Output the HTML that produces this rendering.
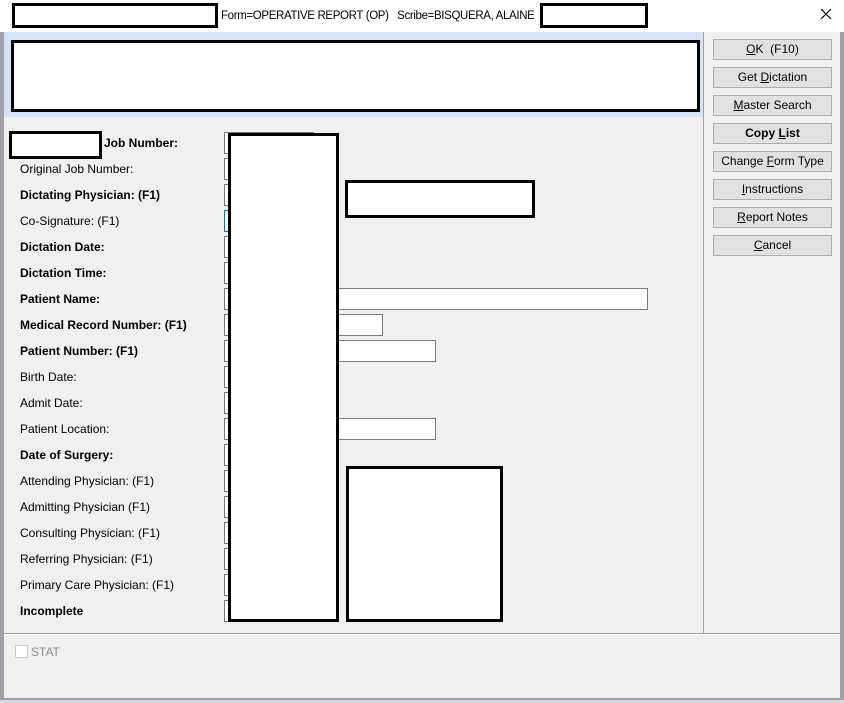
<!DOCTYPE html>
<html><head><style>
body{margin:0;width:844px;height:703px;background:#f0f0f0;font-family:"Liberation Sans",sans-serif;font-size:12px;color:#000;position:relative;overflow:hidden}
div{position:absolute;box-sizing:border-box}
.r{background:#fff;border:3px solid #000}
.l{left:20px;height:16px;line-height:16px;white-space:nowrap}
.b{font-weight:bold}
.in{left:224px;width:90px;height:22px;background:#fff;border:1px solid #7a7a7a}
.btn{left:713px;width:119px;height:21px;border:1px solid #adadad;background:#e1e1e1;text-align:center;line-height:19px}
u{text-decoration:underline}
</style></head><body>
<div style="left:0;top:0;width:844px;height:32px;background:#fff"></div>
<div style="left:221px;top:8px;height:16px;line-height:16px;white-space:nowrap;font-size:11.5px;letter-spacing:-0.35px">Form=OPERATIVE REPORT (OP) &nbsp;&nbsp;Scribe=BISQUERA, ALAINE</div>
<svg style="position:absolute;left:820px;top:8px" width="12" height="12" viewBox="0 0 12 12"><path d="M1 1L11 11M11 1L1 11" stroke="#000" stroke-width="1.2"/></svg>
<div class="r" style="left:12px;top:3px;width:206px;height:25px"></div>
<div class="r" style="left:540px;top:3px;width:108px;height:25px"></div>
<div style="left:0;top:32px;width:4px;height:671px;background:#a0a0a8"></div>
<div style="left:840px;top:32px;width:4px;height:671px;background:#a0a0a8"></div>
<div style="left:4px;top:32px;width:699px;height:85px;background:#d5e5f7"></div>
<div class="r" style="left:11px;top:40px;width:689px;height:72px"></div>
<div style="left:703px;top:32px;width:1px;height:602px;background:#a0a0a0"></div>
<div style="left:4px;top:633px;width:836px;height:1px;background:#a0a0a0"></div>
<div style="left:4px;top:634px;width:836px;height:1px;background:#fff"></div>
<div style="left:4px;top:698px;width:836px;height:2px;background:#a0a0a0"></div>
<div style="left:0;top:700px;width:844px;height:3px;background:#d8d8e0"></div>

<div class="l b" style="left:104px;top:135px">Job Number:</div>
<div class="l" style="top:161px">Original Job Number:</div>
<div class="l b" style="top:187px">Dictating Physician: (F1)</div>
<div class="l" style="top:213px">Co-Signature: (F1)</div>
<div class="l b" style="top:239px">Dictation Date:</div>
<div class="l b" style="top:265px">Dictation Time:</div>
<div class="l b" style="top:291px">Patient Name:</div>
<div class="l b" style="top:317px">Medical Record Number: (F1)</div>
<div class="l b" style="top:343px">Patient Number: (F1)</div>
<div class="l" style="top:369px">Birth Date:</div>
<div class="l" style="top:395px">Admit Date:</div>
<div class="l" style="top:421px">Patient Location:</div>
<div class="l b" style="top:447px">Date of Surgery:</div>
<div class="l" style="top:473px">Attending Physician: (F1)</div>
<div class="l" style="top:499px">Admitting Physician (F1)</div>
<div class="l" style="top:525px">Consulting Physician: (F1)</div>
<div class="l" style="top:551px">Referring Physician: (F1)</div>
<div class="l" style="top:577px">Primary Care Physician: (F1)</div>
<div class="l b" style="top:603px">Incomplete</div>

<div class="in" style="top:132px"></div>
<div class="in" style="top:158px"></div>
<div class="in" style="top:184px"></div>
<div class="in" style="top:210px;border-color:#0078d7"></div>
<div class="in" style="top:236px"></div>
<div class="in" style="top:262px"></div>
<div class="in" style="top:288px;width:424px"></div>
<div class="in" style="top:314px;width:159px"></div>
<div class="in" style="top:340px;width:212px"></div>
<div class="in" style="top:366px"></div>
<div class="in" style="top:392px"></div>
<div class="in" style="top:418px;width:212px"></div>
<div class="in" style="top:444px"></div>
<div class="in" style="top:470px"></div>
<div class="in" style="top:496px"></div>
<div class="in" style="top:522px"></div>
<div class="in" style="top:548px"></div>
<div class="in" style="top:574px"></div>
<div class="in" style="top:600px"></div>

<div class="r" style="left:9px;top:131px;width:93px;height:28px"></div>
<div class="r" style="left:228px;top:133px;width:111px;height:489px"></div>
<div class="r" style="left:345px;top:180px;width:190px;height:38px"></div>
<div class="r" style="left:346px;top:466px;width:157px;height:156px"></div>

<div class="btn" style="top:39px"><u>O</u>K &nbsp;(F10)</div>
<div class="btn" style="top:67px">Get <u>D</u>ictation</div>
<div class="btn" style="top:95px"><u>M</u>aster Search</div>
<div class="btn b" style="top:123px">Copy <u>L</u>ist</div>
<div class="btn" style="top:151px">Change <u>F</u>orm Type</div>
<div class="btn" style="top:179px"><u>I</u>nstructions</div>
<div class="btn" style="top:207px"><u>R</u>eport Notes</div>
<div class="btn" style="top:235px"><u>C</u>ancel</div>

<div style="left:15px;top:645px;width:13px;height:13px;border:1px solid #ccc;background:#fff"></div>
<div style="left:31px;top:644px;color:#8d8d8d;line-height:16px">STAT</div>
</body></html>
